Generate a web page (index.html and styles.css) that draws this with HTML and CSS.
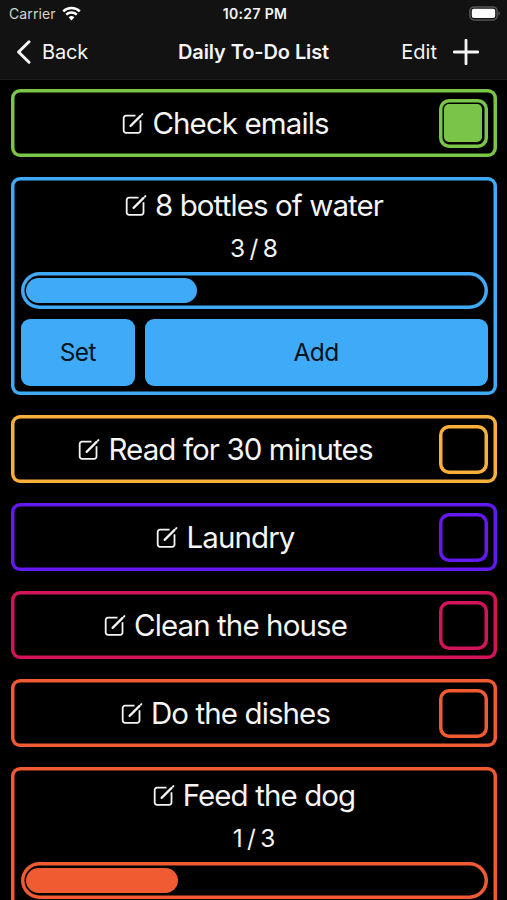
FILE: index.html
```html
<!DOCTYPE html>
<html lang="en">
<head>
    <meta charset="UTF-8">
    <meta name="viewport" content="width=device-width, initial-scale=1.0">
    <title>Daily To-Do List</title>
    <link rel="stylesheet" href="styles.css">
</head>
<body>
    <!-- shared icon -->
    <svg class="sprite" width="0" height="0">
        <symbol id="edit" viewBox="0 0 22 22">
            <path d="M13.5 2.6H4A2.3 2.3 0 0 0 1.7 4.9V17.5A2.3 2.3 0 0 0 4 19.8H16.2A2.3 2.3 0 0 0 18.5 17.5V7.2" fill="none" stroke="currentColor" stroke-width="1.8"/>
            <path d="M8.6 12.9L18.6 2.9" stroke="currentColor" stroke-width="2.2" stroke-linecap="round"/>
            <path d="M20 1.5L20.4 1.1" stroke="currentColor" stroke-width="1.9" stroke-linecap="round"/>
        </symbol>
    </svg>

    <header class="header">
        <div class="statusbar">
            <div class="carrier">
                <span>Carrier</span>
                <svg class="wifi" width="19" height="15" viewBox="0 0 19 15">
                    <path d="M1.2 5.4A12 12 0 0 1 17.8 5.4" fill="none" stroke="currentColor" stroke-width="2.5"/>
                    <path d="M4.2 8.6A7.8 7.8 0 0 1 14.8 8.6" fill="none" stroke="currentColor" stroke-width="2.4"/>
                    <path d="M9.5 14.4L6.6 11.3A4.2 4.2 0 0 1 12.4 11.3Z" fill="currentColor"/>
                </svg>
            </div>
            <div class="clock">10:27 PM</div>
            <svg class="battery" width="32" height="15" viewBox="0 0 32 15">
                <rect x="0.9" y="0.9" width="27.2" height="13" rx="4.2" fill="none" stroke="#555" stroke-width="1.5"/>
                <rect x="2.8" y="2.8" width="23.4" height="9.2" rx="2" fill="#fff"/>
                <path d="M29.4 5.2Q31 6 31 7.4T29.4 9.6Z" fill="#555"/>
            </svg>
        </div>
        <nav class="navbar">
            <div class="back">
                <svg width="16" height="24" viewBox="0 0 16 24">
                    <path d="M13 1.8L2.6 12L13 22.2" fill="none" stroke="currentColor" stroke-width="3" stroke-linecap="round" stroke-linejoin="round"/>
                </svg>
                <span>Back</span>
            </div>
            <h1 class="title">Daily To-Do List</h1>
            <div class="actions">
                <span>Edit</span>
                <svg width="26" height="26" viewBox="0 0 26 26">
                    <path d="M13 1.2V24.8M1.2 13H24.8" stroke="currentColor" stroke-width="2.8" stroke-linecap="round"/>
                </svg>
            </div>
        </nav>
    </header>

    <main class="list">
        <section class="card green">
            <h2 class="task"><svg class="icon"><use href="#edit"/></svg><span>Check emails</span></h2>
            <div class="check checked"></div>
        </section>

        <section class="card counter blue">
            <h2 class="task"><svg class="icon"><use href="#edit"/></svg><span>8 bottles of water</span></h2>
            <div class="count">3 / 8</div>
            <div class="progress"><div class="fill" style="width: 37.5%"></div></div>
            <div class="buttons">
                <button class="btn set">Set</button>
                <button class="btn add">Add</button>
            </div>
        </section>

        <section class="card yellow">
            <h2 class="task"><svg class="icon"><use href="#edit"/></svg><span>Read for 30 minutes</span></h2>
            <div class="check"></div>
        </section>

        <section class="card purple">
            <h2 class="task"><svg class="icon"><use href="#edit"/></svg><span>Laundry</span></h2>
            <div class="check"></div>
        </section>

        <section class="card pink">
            <h2 class="task"><svg class="icon"><use href="#edit"/></svg><span>Clean the house</span></h2>
            <div class="check"></div>
        </section>

        <section class="card orange">
            <h2 class="task"><svg class="icon"><use href="#edit"/></svg><span>Do the dishes</span></h2>
            <div class="check"></div>
        </section>

        <section class="card counter orange">
            <h2 class="task"><svg class="icon"><use href="#edit"/></svg><span>Feed the dog</span></h2>
            <div class="count">1 / 3</div>
            <div class="progress"><div class="fill" style="width: 33.33%"></div></div>
        </section>
    </main>
</body>
</html>
```
FILE: styles.css
```css
* {
    box-sizing: border-box;
}

body {
    margin: 0;
    height: 900px;
    overflow: hidden;
    background: #000;
    color: #f5f5f5;
    font-family: Inter, "Liberation Sans", sans-serif;
}

svg {
    flex: none;
    display: block;
}

.sprite {
    display: none;
}

.header {
    height: 80px;
    background: #121212;
    border-bottom: 1px solid #1a1a1a;
}

.statusbar {
    display: grid;
    grid-template-columns: 1fr auto 1fr;
    align-items: center;
    height: 27px;
    padding: 0 6px 0 9px;
    font-size: 14px;
}

.carrier {
    display: flex;
    align-items: center;
    gap: 6px;
    color: #d4d4d4;
    letter-spacing: 0.1px;
}

.wifi {
    color: #fff;
    margin-top: -1px;
}

.clock {
    font-weight: 600;
    font-size: 14px;
    letter-spacing: 0.35px;
}

.battery {
    justify-self: end;
    margin-top: -1px;
}

.navbar {
    display: grid;
    grid-template-columns: 1fr auto 1fr;
    align-items: center;
    height: 50px;
    padding: 0 16px;
    font-size: 20px;
}

.back {
    display: flex;
    align-items: center;
    gap: 10px;
    letter-spacing: -0.2px;
}

.title {
    margin: 0;
    font-size: 20px;
    font-weight: 600;
    letter-spacing: -0.1px;
}

.actions {
    display: flex;
    align-items: center;
    justify-content: flex-end;
    gap: 16px;
    padding-right: 12px;
}

.list {
    display: flex;
    flex-direction: column;
    gap: 20px;
    height: 820px;
    overflow: hidden;
    padding: 9px 10px 0 11px;
}

.card {
    flex: none;
    display: flex;
    align-items: center;
    height: 68px;
    padding: 0 9.5px;
    border-radius: 9px;
    box-shadow: inset 0 0 0 3.5px var(--color);
}

.green { --color: #7ac547; }
.blue { --color: #3fabf8; }
.yellow { --color: #fbb03b; }
.purple { --color: #6319f0; }
.pink { --color: #d4145a; }
.orange { --color: #f15b31; }

.task {
    flex: 1;
    display: flex;
    align-items: center;
    justify-content: center;
    gap: 8px;
    margin: 0;
    padding-right: 8px;
    font-size: 29.5px;
    font-weight: 400;
    line-height: 36px;
    letter-spacing: -0.9px;
    white-space: nowrap;
}

.icon {
    width: 22px;
    height: 22px;
    margin-top: 1px;
}

.check {
    width: 49px;
    height: 49px;
    padding: 5.5px;
    border-radius: 10px;
    box-shadow: inset 0 0 0 3.5px var(--color);
}

.checked::before {
    content: "";
    display: block;
    height: 38px;
    border-radius: 5px;
    background: var(--color);
}

.counter {
    flex-direction: column;
    align-items: stretch;
    height: 218px;
    padding-top: 10px;
}

.counter .task {
    flex: none;
    padding-right: 0;
}

.count {
    margin-top: 10px;
    font-size: 24.5px;
    line-height: 30px;
    word-spacing: -2.5px;
    text-align: center;
}

.progress {
    height: 36.5px;
    margin-top: 9px;
    padding: 6px 5.5px;
    border-radius: 19px;
    box-shadow: inset 0 0 0 3.5px var(--color);
}

.fill {
    height: 24.5px;
    border-radius: 12.5px;
    background: var(--color);
}

.buttons {
    display: flex;
    gap: 9.5px;
    margin-top: 10px;
}

.btn {
    height: 67px;
    padding: 0;
    border: 0;
    border-radius: 9px;
    background: var(--color);
    color: #06121c;
    font: inherit;
    font-size: 24.5px;
    letter-spacing: -0.6px;
}

.set {
    width: 114.5px;
}

.add {
    flex: 1;
}
```
